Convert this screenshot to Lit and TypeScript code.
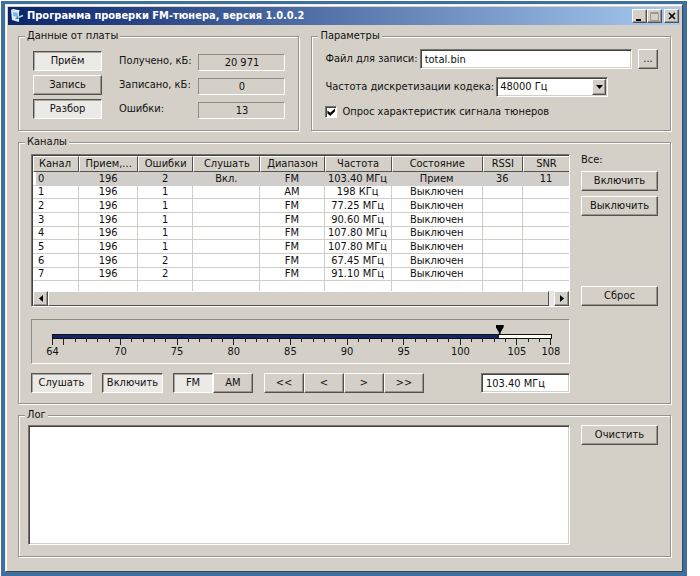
import { LitElement, html, css, svg } from "lit";
import { customElement, property, state } from "lit/decorators.js";
import { classMap } from "lit/directives/class-map.js";

const controls = css`
  * { box-sizing: border-box; }
  button, input, select, textarea { font: inherit; color: inherit; border-radius: 0; margin: 0; outline: none; }
  .btn {
    height: 20px; padding: 0; white-space: nowrap; text-align: center;
    background: #d4d0c8; border: 1px solid; border-color: #fff #55524e #55524e #fff;
    box-shadow: inset -1px -1px #9a968f;
  }
  .btn.down {
    background: #eceae6; border-color: #55524e #fff #fff #55524e;
    box-shadow: inset 1px 1px #a9a59e;
  }
  .field {
    height: 20px; padding: 0 4px; background: #fff; border: 1px solid;
    border-color: #77736d #fff #fff #77736d;
    box-shadow: inset 1px 1px #45423f, inset -1px -1px #d4d0c8;
  }
`;

interface Channel { rx: number; err: number; listen: string; band: string; freq: string; status: string; rssi: string; snr: string; }

const off = (err: number, band: string, freq: string): Channel =>
  ({ rx: 196, err, listen: "", band, freq, status: "Выключен", rssi: "", snr: "" });

const CHANNELS: Channel[] = [
  { rx: 196, err: 2, listen: "Вкл.", band: "FM", freq: "103.40 МГц", status: "Прием", rssi: "36", snr: "11" },
  off(1, "AM", "198 КГц"),
  off(1, "FM", "77.25 МГц"),
  off(1, "FM", "90.60 МГц"),
  off(1, "FM", "107.80 МГц"),
  off(1, "FM", "107.80 МГц"),
  off(2, "FM", "67.45 МГц"),
  off(2, "FM", "91.10 МГц"),
];

const COLUMNS: [string, number][] = [
  ["Канал", 46], ["Прием,...", 59], ["Ошибки", 55], ["Слушать", 67], ["Диапазон", 64],
  ["Частота", 67], ["Состояние", 91], ["RSSI", 40], ["SNR", 46],
];

@customElement("channel-table")
export class ChannelTable extends LitElement {
  @property({ attribute: false }) rows: Channel[] = [];
  @state() private selected = 0;

  static styles = [controls, css`
    :host { display: block; }
    .list { background: #fff; border: 1px solid; border-color: #77736d #fff #fff #77736d; box-shadow: inset 1px 1px #45423f; padding: 1px 0 0 1px; }
    table { width: 100%; table-layout: fixed; border-collapse: separate; border-spacing: 0; }
    th {
      height: 16px; padding: 0; font-weight: normal; background: #d4d0c8; line-height: 14px; white-space: nowrap;
      border: 1px solid; border-color: #fff #55524e #55524e #fff;
    }
    td {
      height: 14px; padding: 0; line-height: 12px; text-align: center; white-space: nowrap;
      border-right: 1px solid #d0cdc8; border-bottom: 1px solid #d0cdc8;
    }
    th:first-child, td:first-child { text-align: left; padding-left: 5px; }
    th:last-child, td:last-child { border-right: 0; }
    tr:nth-child(3n + 2) td { height: 13px; }
    .sel td { background: #d0cdca; border-color: #d0cdca; }
    .sel td:first-child { box-shadow: inset 3px 0 #fff; }
    .rest td { height: 10px; border-bottom: 0; }
    .scroll { display: flex; height: 15px; background: #e9e7e3; }
    .arrow { width: 15px; height: 15px; display: grid; place-items: center; }
    .thumb { flex: 1; height: 15px; margin-right: 5px; background: #d4d0c8; border: 1px solid; border-color: #fff #55524e #55524e #fff; }
  `];

  render() {
    return html`
      <div class="list">
        <table>
          <colgroup>${COLUMNS.map(([, w]) => html`<col style="width:${w}px">`)}</colgroup>
          <thead><tr>${COLUMNS.map(([name]) => html`<th scope="col">${name}</th>`)}</tr></thead>
          <tbody>
            ${this.rows.map((r, i) => html`
              <tr class=${classMap({ sel: i === this.selected })} @click=${() => (this.selected = i)}>
                <td>${i}</td><td>${r.rx}</td><td>${r.err}</td><td>${r.listen}</td><td>${r.band}</td>
                <td>${r.freq}</td><td>${r.status}</td><td>${r.rssi}</td><td>${r.snr}</td>
              </tr>`)}
            <tr class="rest">${COLUMNS.map(() => html`<td></td>`)}</tr>
          </tbody>
        </table>
        <div class="scroll">
          <button class="btn arrow" aria-label="Влево"><svg width="4" height="7"><path d="M4 0v7L0 3.5z" /></svg></button>
          <div class="thumb"></div>
          <button class="btn arrow" aria-label="Вправо"><svg width="4" height="7"><path d="M0 0v7l4-3.5z" /></svg></button>
        </div>
      </div>`;
  }
}

const MIN = 64;
const MAX = 108;

@customElement("tuning-scale")
export class TuningScale extends LitElement {
  @property({ type: Number }) value = MIN;

  static styles = [controls, css`
    :host { display: block; }
    .panel { height: 45px; padding: 14px 17px 0 20px; border: 1px solid; border-color: #8f8b85 #fff #fff #8f8b85; }
    .rail { position: relative; }
    .bar { height: 5px; border: 1px solid #111; background: #fffff4; }
    .fill { height: 3px; background: #14246c; }
    .knob { position: absolute; left: -4px; top: -9px; height: 10px; width: calc(100% + 8px); appearance: none; background: none; }
    .knob::-webkit-slider-thumb { appearance: none; width: 8px; height: 10px; background: #000; clip-path: polygon(0 0, 100% 0, 100% 20%, 60% 75%, 60% 100%, 40% 100%, 40% 75%, 0 20%); }
    .ticks { display: flex; justify-content: space-between; }
    .tick { width: 1px; height: 22px; display: flex; flex-direction: column; align-items: center; }
    .mark { flex: none; width: 1px; height: 3px; background: #222; }
    .mark.major { height: 6px; }
    .num { line-height: 14px; white-space: nowrap; }
  `];

  render() {
    const units = Array.from({ length: MAX - MIN + 1 }, (_, i) => MIN + i);
    return html`
      <div class="panel">
        <div class="rail">
          <div class="bar"><div class="fill" style="width:${((this.value - MIN) / (MAX - MIN)) * 100}%"></div></div>
          <input class="knob" type="range" aria-label="Частота" min=${MIN} max=${MAX} step="0.05" .value=${String(this.value)}
            @input=${(e: Event) => (this.value = Number((e.target as HTMLInputElement).value))}>
        </div>
        <div class="ticks">
          ${units.map((u) => {
            const major = u % 5 === 0 || u === MIN || u === MAX;
            return html`<div class="tick"><div class=${classMap({ mark: true, major })}></div>${major && u !== 65 ? html`<span class="num">${u}</span>` : ""}</div>`;
          })}
        </div>
      </div>`;
  }
}

const appIcon = svg`
  <path d="M1 1l8 1v11l-7-2z" fill="#dceefb" />
  <path d="M1 1l2-1 7 1.500-1 1z" fill="#fff" />
  <path d="M3 3l5 1v4l-5-1z" fill="#7db8ea" />
  <path d="M5 10l3-3 2 1-2 2z" fill="#3f74b8" />
  <path d="M8 8.500l5-2" stroke="#c8d4e8" stroke-width="1.500" />`;

@customElement("app-root")
export class AppRoot extends LitElement {
  static styles = [controls, css`
    :host { display: block; padding: 1px 13px 1px 1px; background: #fff; color: #111; font: 11px/14px "DejaVu Sans Condensed", "DejaVu Sans", sans-serif; }
    .desk { padding: 3px 4px 5px; background: #3f6f9c; }
    .window { padding: 2px; background: #d4d0c8; border: 1px solid; border-color: #eceae6 #3a4658 #3a4658 #eceae6; box-shadow: inset 1px 1px #fff; }
    .title { display: flex; align-items: center; height: 18px; padding: 0 1px 0 2px; background: linear-gradient(to right, #0a246a, #a6caf0); color: #fff; }
    .title h1 { flex: 1; margin: 0 0 0 3px; font-size: 11px; line-height: 16px; }
    .cap { display: grid; place-items: center; width: 15px; height: 14px; color: #000; }
    .cap.close { margin-left: 2px; }
    .body { padding: 4px 9px 12px 10px; display: grid; gap: 4px; }
    .top { display: grid; grid-template-columns: 281fr 359fr; gap: 12px; }
    fieldset { min-width: 0; margin: 0; padding: 0 6px; border: 1px solid #96928c; box-shadow: 1px 1px #fff, inset 1px 1px #fff; }
    legend { padding: 0 2px; line-height: 14px; background: #d4d0c8; }
    .stats { display: grid; grid-template-columns: 69px 1fr 87px; column-gap: 6px; row-gap: 4px; align-items: end; padding: 8px 7px 11px 8px; }
    .stats label { align-self: center; margin-left: 11px; white-space: nowrap; }
    output { display: block; height: 17px; line-height: 16px; text-align: center; border: 1px solid; border-color: #8f8b85 #fff #fff #8f8b85; }
    .params { display: grid; gap: 8px; padding: 6px 6px 9px 7px; }
    .line { display: flex; align-items: center; }
    .file { flex: 1; min-width: 0; margin: 0 6px 0 2px; }
    .more { width: 20px; }
    .combo { position: relative; margin-left: 2px; width: 112px; }
    .combo select { display: block; width: 100%; appearance: none; padding: 0 20px 0 3px; }
    .drop { position: absolute; right: 2px; top: 2px; width: 14px; height: 16px; display: grid; place-items: center; pointer-events: none; }
    .check { width: 12px; height: 12px; appearance: none; flex: none; background: #fff; border: 1px solid; border-color: #77736d #fff #fff #77736d; box-shadow: inset 1px 1px #45423f; display: grid; place-items: center; }
    .check:checked::after { content: ""; width: 8px; height: 8px; background: #000; clip-path: polygon(0 30%, 35% 60%, 100% 0, 100% 38%, 35% 100%, 0 68%); }
    .tick-label { margin-left: 5px; }
    .split { display: grid; grid-template-columns: 1fr 77px; column-gap: 11px; }
    .channels { padding: 5px 6px 10px; }
    .log { padding: 3px 6px 11px 3px; }
    .main { display: grid; gap: 12px; }
    .side { display: grid; gap: 5px; align-content: start; }
    .side span { line-height: 12px; }
    .side .reset { margin-top: 65px; }
    .keys { display: flex; margin-top: -3px; }
    .keys .btn { width: 40px; }
    .keys .wide { width: 61px; margin-right: 10px; }
    .keys .last { margin-right: 11px; }
    .freq { width: 89px; margin-left: auto; }
    textarea { display: block; width: 100%; height: 120px; resize: none; background: #fff; border: 1px solid; border-color: #77736d #fff #fff #77736d; box-shadow: inset 1px 1px #45423f, inset -1px -1px #d4d0c8; }
  `];

  @state() private down: Record<string, boolean> = { rx: true, parse: true, listen: true, on: true, fm: true };

  private toggle(key: string, label: string, extra = "") {
    const on = !!this.down[key];
    return html`<button class="btn ${extra} ${on ? "down" : ""}" aria-pressed=${on}
      @click=${() => (this.down = { ...this.down, [key]: !on })}>${label}</button>`;
  }

  render() {
    return html`
      <div class="desk"><div class="window">
        <header class="title">
          <svg width="14" height="14" viewBox="0 0 14 14" aria-hidden="true">${appIcon}</svg>
          <h1>Программа проверки FM-тюнера, версия 1.0.0.2</h1>
          <button class="btn cap" aria-label="Свернуть"><svg width="9" height="9"><path d="M1 7h5v2H1z" /></svg></button>
          <button class="btn cap" aria-label="Развернуть"><svg width="9" height="9"><path d="M.5 1.500h8v7h-8zM.5 .5h8" fill="none" stroke="#9a968f" /></svg></button>
          <button class="btn cap close" aria-label="Закрыть"><svg width="8" height="8"><path d="M1 1l6 6M7 1L1 7" stroke="#000" stroke-width="1.600" /></svg></button>
        </header>
        <main class="body">
          <div class="top">
            <fieldset>
              <legend>Данные от платы</legend>
              <div class="stats">
                ${this.toggle("rx", "Приём")}<label for="got">Получено, кБ:</label><output id="got">20 971</output>
                ${this.toggle("rec", "Запись")}<label for="saved">Записано, кБ:</label><output id="saved">0</output>
                ${this.toggle("parse", "Разбор")}<label for="errs">Ошибки:</label><output id="errs">13</output>
              </div>
            </fieldset>
            <fieldset>
              <legend>Параметры</legend>
              <div class="params">
                <div class="line">
                  <label for="file">Файл для записи:</label>
                  <input class="field file" id="file" type="text" value="total.bin">
                  <button class="btn more">...</button>
                </div>
                <div class="line">
                  <label for="rate">Частота дискретизации кодека:</label>
                  <div class="combo">
                    <select class="field" id="rate"><option>48000 Гц</option></select>
                    <span class="btn drop"><svg width="7" height="4"><path d="M0 0h7L3.500 4z" /></svg></span>
                  </div>
                </div>
                <div class="line">
                  <input class="check" id="poll" type="checkbox" checked>
                  <label class="tick-label" for="poll">Опрос характеристик сигнала тюнеров</label>
                </div>
              </div>
            </fieldset>
          </div>
          <fieldset>
            <legend>Каналы</legend>
            <div class="split channels">
              <div class="main">
                <channel-table .rows=${CHANNELS}></channel-table>
                <tuning-scale value="103.4"></tuning-scale>
                <div class="keys">
                  ${this.toggle("listen", "Слушать", "wide")}
                  ${this.toggle("on", "Включить", "wide")}
                  ${this.toggle("fm", "FM")}
                  ${this.toggle("am", "AM", "last")}
                  <button class="btn">&lt;&lt;</button><button class="btn">&lt;</button><button class="btn">&gt;</button><button class="btn">&gt;&gt;</button>
                  <input class="field freq" type="text" aria-label="Частота" value="103.40 МГц">
                </div>
              </div>
              <div class="side">
                <span>Все:</span>
                <button class="btn">Включить</button>
                <button class="btn">Выключить</button>
                <button class="btn reset">Сброс</button>
              </div>
            </div>
          </fieldset>
          <fieldset>
            <legend>Лог</legend>
            <div class="split log">
              <textarea aria-label="Лог"></textarea>
              <div class="side"><button class="btn">Очистить</button></div>
            </div>
          </fieldset>
        </main>
      </div></div>`;
  }
}
